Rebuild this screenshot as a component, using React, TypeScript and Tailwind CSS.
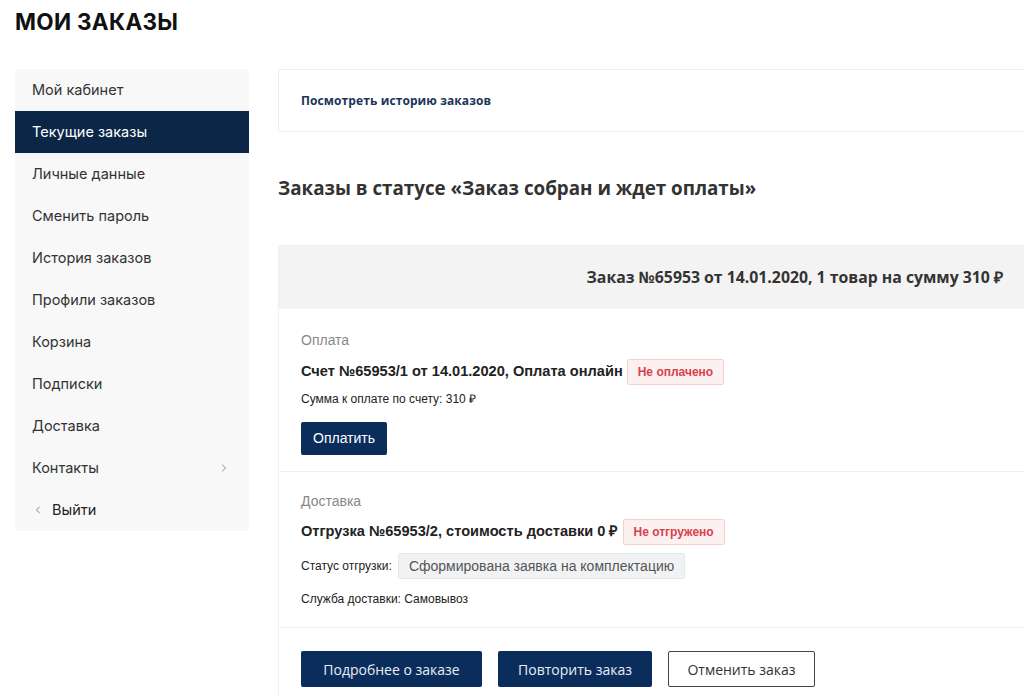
import { ChevronLeft, ChevronRight } from "lucide-react"

const menu = [
    "Мой кабинет",
    "Текущие заказы",
    "Личные данные",
    "Сменить пароль",
    "История заказов",
    "Профили заказов",
    "Корзина",
    "Подписки",
    "Доставка",
]

const Sidebar = () => {
    return <aside className="w-[234px] shrink-0 bg-[#f8f8f9] font-['Inter',sans-serif] text-[14.5px] text-[#333]">
        {menu.map((item) => (
            <div
                key={item}
                className={
                    item === "Текущие заказы"
                        ? "h-[42px] flex items-center px-[17px] bg-[#0b2647] text-white"
                        : "h-[42px] flex items-center px-[17px]"
                }
            >
                {item}
            </div>
        ))}
        <div className="h-[42px] flex items-center justify-between px-[17px]">
            <span>Контакты</span>
            <ChevronRight className="w-3 h-3 text-[#888] mr-[2px]" />
        </div>
        <div className="h-[42px] flex items-center gap-[8px] px-[17px]">
            <ChevronLeft className="w-3 h-3 text-[#888]" />
            <span className="text-[#222]">Выйти</span>
        </div>
    </aside>
}

const Badge = ({ children }: { children: string }) => (
    <span className="inline-flex items-center h-[26px] px-[10px] ml-[4px] border border-[#f3d2d2] bg-[#fdf0f0] rounded-[2px] text-[12px] font-bold text-[#d8414c]">
        {children}
    </span>
)

export default function App() {
    return <div className="w-[1024px] h-[696px] overflow-hidden bg-white">
        <h1 className="pl-[15px] pt-[5px] h-[69px] font-['Inter',sans-serif] text-[22.5px] font-bold text-[#111] tracking-[0.3px]">
            МОИ ЗАКАЗЫ
        </h1>
        <div className="flex gap-[29px] pl-[15px]">
            <div className="self-start">
                <Sidebar />
            </div>

            <main className="w-[760px] shrink-0 font-['Open_Sans',sans-serif]">
                <div className="h-[63px] border border-[#efefef] flex items-center px-[22px]">
                    <a className="text-[12px] font-bold text-[#1b3558] tracking-[0.1px]">Посмотреть историю заказов</a>
                </div>

                <h2 className="mt-[42px] text-[18.8px] font-bold text-[#333]">
                    Заказы в статусе «Заказ собран и ждет оплаты»
                </h2>

                <div className="mt-[43px] border border-[#f0f0f0]">
                    <div className="h-[63px] bg-[#f3f3f3] flex items-center justify-end pr-[34px] text-[15.8px] font-bold text-[#333]">
                        Заказ №65953 от 14.01.2020, 1 товар на сумму 310 ₽
                    </div>

                    <div className="px-[22px] pt-[21px] pb-[16px] border-b border-[#efefef] font-['Liberation_Sans',sans-serif] text-[#222]">
                        <div className="text-[14px] text-[#888]">Оплата</div>
                        <div className="mt-[8px] flex items-center text-[14.6px] font-bold">
                            Счет №65953/1 от 14.01.2020, Оплата онлайн
                            <Badge>Не оплачено</Badge>
                        </div>
                        <div className="mt-[5px] text-[12px]">Сумма к оплате по счету: 310 ₽</div>
                        <button className="mt-[14px] h-[33px] px-[12px] bg-[#0b2d5c] rounded-[2px] text-white text-[14px]">
                            Оплатить
                        </button>
                    </div>

                    <div className="px-[22px] pt-[19px] pb-[19px] border-b border-[#efefef] font-['Liberation_Sans',sans-serif] text-[#222]">
                        <div className="text-[14px] text-[#888]">Доставка</div>
                        <div className="mt-[7px] flex items-center text-[14.6px] font-bold">
                            Отгрузка №65953/2, стоимость доставки 0 ₽
                            <Badge>Не отгружено</Badge>
                        </div>
                        <div className="mt-[8px] flex items-center text-[12px]">
                            Статус отгрузки:
                            <span className="ml-[6px] inline-flex items-center h-[26px] px-[10px] bg-[#f1f2f4] border border-[#e5e7ea] rounded-[2px] text-[14px] text-[#555]">
                                Сформирована заявка на комплектацию
                            </span>
                        </div>
                        <div className="mt-[11px] text-[12px]">Служба доставки: Самовывоз</div>
                    </div>

                    <div className="px-[22px] pt-[23px] pb-[20px] flex gap-[16px] font-['Open_Sans',sans-serif] text-[14px]">
                        <button className="h-[36px] w-[181px] bg-[#0b2d5c] rounded-[2px] text-[#e8eef6]">
                            Подробнее о заказе
                        </button>
                        <button className="h-[36px] w-[154px] bg-[#0b2d5c] rounded-[2px] text-[#e8eef6]">
                            Повторить заказ
                        </button>
                        <button className="h-[36px] w-[147px] border border-[#444] rounded-[2px] text-[#333] bg-white">
                            Отменить заказ
                        </button>
                    </div>
                </div>
            </main>
        </div>
    </div>
}
